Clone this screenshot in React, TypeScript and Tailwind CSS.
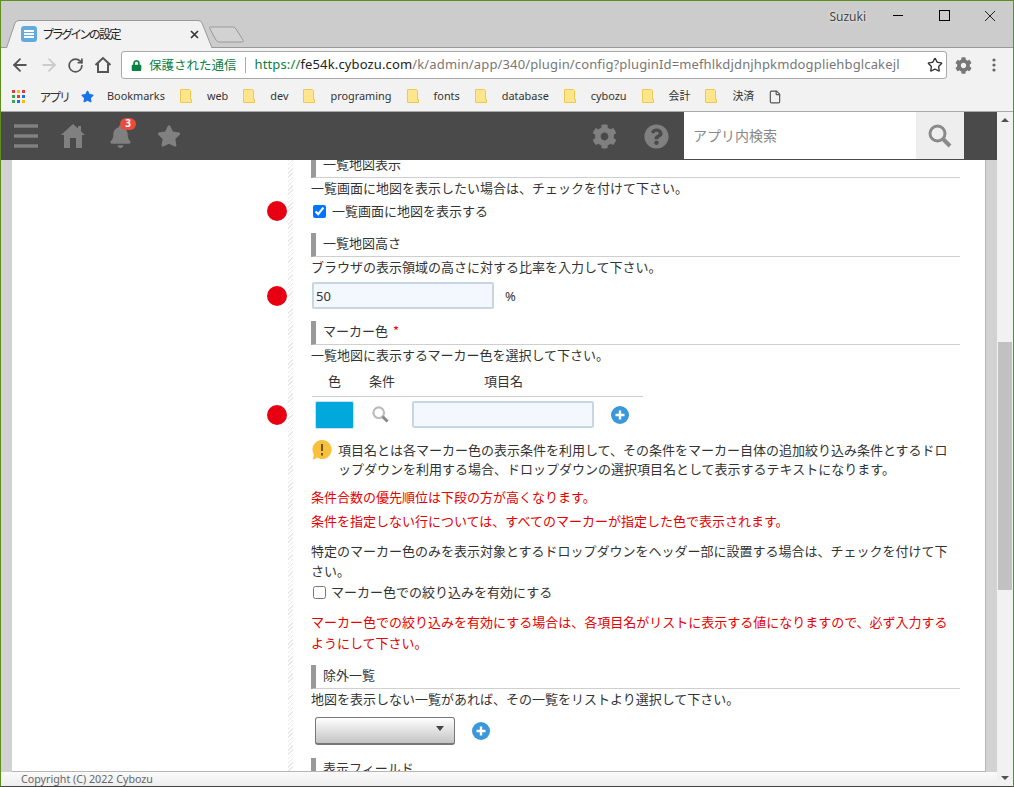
import { ArrowLeft, ArrowRight, RotateCw, Star, File } from "lucide-react";
import { FaBell, FaCog, FaLock, FaQuestionCircle, FaStar } from "react-icons/fa";

const jp = "font-['Noto_Sans_CJK_JP','Noto_Sans',sans-serif]";

const bookmarks = [
  { label: "web" },
  { label: "dev" },
  { label: "programing" },
  { label: "fonts" },
  { label: "database" },
  { label: "cybozu" },
  { label: "会計" },
  { label: "決済" },
];

const appDots = [
  "bg-[#e53935]", "bg-[#fbbc05]", "bg-[#e53935]",
  "bg-[#34a853]", "bg-[#e53935]", "bg-[#1a73e8]",
  "bg-[#34a853]", "bg-[#1a73e8]", "bg-[#fbbc05]",
];

function Folder() {
  return (
    <svg width="12" height="14" viewBox="0 0 12 14" className="shrink-0">
      <path d="M0.5 0.5H9.5L10.5 1.5V10.5H11.5V13.5H0.5Z" fill="#ffe68c" stroke="#eec94f" />
    </svg>
  );
}

function Dot() {
  return <span className="h-5 w-5 shrink-0 rounded-full bg-[#e60012]" />;
}

function Plus() {
  return (
    <span className="flex h-[18px] w-[18px] shrink-0 items-center justify-center rounded-full bg-[#3a97d9]">
      <svg width="12" height="12" viewBox="0 0 12 12">
        <path d="M6 1.5V10.5M1.5 6H10.5" stroke="#fff" strokeWidth="2.4" />
      </svg>
    </span>
  );
}

function Lens({ size, lens, handle }: { size: number; lens: string; handle: string }) {
  return (
    <svg width={size} height={size} viewBox="0 0 24 24" className="shrink-0">
      <circle cx="9.500" cy="9.500" r="7.500" fill="none" stroke={lens} strokeWidth="3" />
      <path d="M15 15L22 22" stroke={handle} strokeWidth="4" />
    </svg>
  );
}

function Heading({ children }: { children: React.ReactNode }) {
  return (
    <div className="flex h-[24px] items-center border-b border-l-[5px] border-b-[#cfcfcf] border-l-[#999] pb-[3px] pl-[7px] text-[13px] leading-[20px]">
      {children}
    </div>
  );
}

export default function App() {
  return (
    <div className={`flex h-[787px] w-[1014px] flex-col overflow-hidden border-x border-t border-x-[#5b8f1f] border-t-[#5b8f1f] border-b border-b-[#444] bg-[#f2f2f2] text-[#333] ${jp}`}>
      {/* title bar + tab */}
      <div className="flex h-[47px] shrink-0 items-end border-b border-[#999] bg-[#cccccc] pl-[5px]">
        <div className="relative -mb-px flex h-[28px] w-[207px] items-center pl-[15px]">
          <svg width="207" height="28" viewBox="0 0 207 28" className="absolute left-0 top-0">
            <path d="M0.5 28L9 3Q10 0.5 13 0.5H192Q195 0.5 196 3L206 28" fill="#f2f2f2" stroke="#999" />
          </svg>
          <span className="relative flex h-4 w-4 flex-col justify-center gap-px rounded-[3px] bg-[#62abdf] px-[3px]">
            <span className="h-[2px] bg-white" />
            <span className="h-[2px] bg-white" />
            <span className="h-[2px] bg-white" />
          </span>
          <span className="relative ml-[6px] w-[138px] whitespace-nowrap text-[12px] tracking-[-1.5px] [font-feature-settings:'palt'] text-[#222]">プラグインの設定</span>
          <svg width="9" height="9" viewBox="0 0 9 9" className="relative ml-[9px]">
            <path d="M1 1L8 8M8 1L1 8" stroke="#333" strokeWidth="1.6" />
          </svg>
        </div>
        <svg width="36" height="18" viewBox="0 0 36 18" className="-ml-[4px] mb-[3px]">
          <path d="M1 1H24Q26 1 27 3L34 14Q35 16 33 16H10Q8 16 7 14L1 3Q0 1 1 1Z" fill="#d2d2d2" stroke="#9a9a9a" />
        </svg>
        <div className="flex-1 self-stretch">
          <div className="flex h-[30px] items-start justify-end">
            <span className="mt-[7px] font-['Noto_Sans'] text-[12px] text-[#444] [text-shadow:0_0_3px_#fff]">Suzuki</span>
            <div className="ml-[27px] mt-[14px] h-px w-[10px] bg-black" />
            <div className="ml-[36px] mt-[9px] h-[11px] w-[11px] border border-black" />
            <svg width="12" height="12" viewBox="0 0 12 12" className="ml-[34px] mr-[17px] mt-[9px]">
              <path d="M1 1L11 11M11 1L1 11" stroke="#222" />
            </svg>
          </div>
        </div>
      </div>

      {/* toolbar */}
      <div className="flex h-[34px] shrink-0 items-center pl-[9px]">
        <ArrowLeft size={20} strokeWidth={2.2} color="#555" />
        <ArrowRight size={20} strokeWidth={2.2} color="#ccc" className="ml-[9px]" />
        <RotateCw size={17} strokeWidth={2.4} color="#555" className="ml-[8px]" />
        <svg width="18" height="18" viewBox="0 0 18 18" className="ml-[10px]">
          <path d="M1.5 9L9 2L16.5 9M4 7.500V16H14V7.500" fill="none" stroke="#555" strokeWidth="2" />
        </svg>
        <div className="ml-[9px] flex h-[28px] w-[826px] items-center rounded-[3px] border border-[#a9a9a9] bg-white pl-[9px]">
          <FaLock size={11} color="#0b8043" />
          <span className="ml-[7px] text-[12.5px] text-[#0b8043]">保護された通信</span>
          <span className="ml-[8px] h-[16px] w-px bg-[#aaa]" />
          <span className="ml-[9px] whitespace-nowrap font-['Noto_Sans'] text-[13px] tracking-[0.14px] text-[#777]">
            <span className="text-[#0b8043]">https://</span>
            <span className="text-[#222]">fe54k.cybozu.com</span>
            /k/admin/app/340/plugin/config?pluginId=mefhlkdjdnjhpkmdogpliehbglcakejl
          </span>
          <Star size={16} strokeWidth={2} color="#333" className="ml-auto mr-[3px]" />
        </div>
        <FaCog size={17} color="#777" className="ml-[8px]" />
        <svg width="4" height="14" viewBox="0 0 4 14" className="ml-[20px]">
          <circle cx="2" cy="2" r="1.600" fill="#666" />
          <circle cx="2" cy="7" r="1.600" fill="#666" />
          <circle cx="2" cy="12" r="1.600" fill="#666" />
        </svg>
      </div>

      {/* bookmarks */}
      <div className="flex h-[30px] shrink-0 items-center gap-[15px] border-b border-[#aaa] pl-[11px] text-[10.9px] text-[#333]">
        <div className="grid grid-cols-3 gap-[2px]">
          {appDots.map((c, i) => (
            <span key={i} className={`h-[3px] w-[3px] ${c}`} />
          ))}
        </div>
        <span className="w-[26px] whitespace-nowrap text-[12px] tracking-[-1.2px] [font-feature-settings:'palt']">アプリ</span>
        <FaStar size={13} color="#1a73e8" />
        <span className="-ml-[2px] font-['Noto_Sans']">Bookmarks</span>
        {bookmarks.map((b) => (
          <div key={b.label} className="flex items-center gap-[15px]">
            <Folder />
            <span className="font-['Noto_Sans','Noto_Sans_CJK_JP']">{b.label}</span>
          </div>
        ))}
        <File size={14} color="#555" className="-ml-px" />
      </div>

      {/* kintone page */}
      <div className="flex min-h-0 flex-1">
        <div className="flex w-[996px] shrink-0 flex-col">
          {/* app header */}
          <div className="flex h-[48px] shrink-0 items-center bg-[#4a4a4a] text-[#808080]">
            <svg width="26" height="26" viewBox="0 0 26 26" className="ml-[12px]">
              <path d="M1 3H25M1 13H25M1 23H25" stroke="#808080" strokeWidth="3.400" />
            </svg>
            <svg width="26" height="26" viewBox="0 0 26 26" className="ml-[21px]">
              <path d="M13 1L18 5.500V3H21V8.300L25 12H22V25H16V15H10V25H4V12H1Z" fill="#808080" />
            </svg>
            <div className="relative ml-[23px]">
              <FaBell size={23} />
              <span className="absolute -right-[4px] -top-[7px] flex h-[12px] w-[16px] items-center justify-center rounded-full bg-[#e74c3c] font-['Noto_Sans'] text-[10px] font-bold text-white">3</span>
            </div>
            <FaStar size={24} className="ml-[25px]" />
            <FaCog size={25} className="ml-auto" />
            <FaQuestionCircle size={25} className="ml-[27px]" />
            <div className="ml-[15px] flex h-[47px] w-[232px] items-center self-start bg-white pl-[9px] text-[14px] text-[#888]">アプリ内検索</div>
            <div className="flex h-[47px] w-[48px] items-center justify-center self-start bg-[#eeeeee]">
              <Lens size={24} lens="#8a8a8a" handle="#8a8a8a" />
            </div>
            <div className="w-[33px]" />
          </div>

          {/* form area */}
          <div className="flex min-h-0 flex-1 bg-[#d2d2d2] pl-[11px] pr-[11px]">
            <div className="min-w-0 flex-1 overflow-hidden border-b border-r border-[#b5b5b5] bg-white bg-[repeating-linear-gradient(135deg,#e8e8e8_0,#e8e8e8_1px,#fff_1px,#fff_3px)] bg-[length:5px_100%] bg-[position:276px_0] bg-no-repeat pl-[299px] pr-[25px] text-[13px] leading-[20px]">
              <div className="-mt-[6px]">
                <Heading>一覧地図表示</Heading>
              </div>
              <p>一覧画面に地図を表示したい場合は、チェックを付けて下さい。</p>
              <div className="-ml-[44px] mt-[3px] flex h-[20px] items-center">
                <Dot />
                <input type="checkbox" defaultChecked readOnly className="ml-[26px] h-[13px] w-[13px]" />
                <span className="ml-[6px]">一覧画面に地図を表示する</span>
              </div>
              <div className="mt-[12px]">
                <Heading>一覧地図高さ</Heading>
              </div>
              <p>ブラウザの表示領域の高さに対する比率を入力して下さい。</p>
              <div className="-ml-[44px] mt-[5px] flex items-center">
                <Dot />
                <input
                  defaultValue="50"
                  className="ml-[25px] h-[27px] w-[182px] rounded-[2px] border-2 border-[#c8d6e3] bg-[#f2f8fd] px-[2px] font-['Noto_Sans'] text-[13px] text-[#333]"
                />
                <span className="ml-[11px] font-['Noto_Sans']">%</span>
              </div>
              <div className="mt-[12px]">
                <Heading>
                  マーカー色<span className="ml-[5px] text-[#e00]">*</span>
                </Heading>
              </div>
              <p>一覧地図に表示するマーカー色を選択して下さい。</p>

              {/* marker table */}
              <div className="ml-[1px] mt-[2px] flex h-[30px] w-[331px] items-center border-b border-[#cfcfcf] pb-[2px]">
                <span className="ml-[16px]">色</span>
                <span className="ml-[28px]">条件</span>
                <span className="ml-[89px]">項目名</span>
              </div>
              <div className="-ml-[44px] mt-[4px] flex h-[27px] items-center">
                <Dot />
                <span className="ml-[28px] h-[28px] w-[39px] rounded-[2px] border border-[#cde] bg-[#00a8dc]" />
                <span className="ml-[18px]">
                  <Lens size={17} lens="#bbb" handle="#888" />
                </span>
                <input className="ml-[23px] h-[27px] w-[182px] rounded-[2px] border-2 border-[#c8d6e3] bg-[#f2f8fd]" />
                <span className="ml-[17px]">
                  <Plus />
                </span>
              </div>

              {/* notice */}
              <div className="ml-[1px] mt-[12px] flex">
                <svg width="20" height="20" viewBox="0 0 20 20" className="shrink-0">
                  <path d="M10 0A9.500 9.500 0 1 1 5 17.500Q3 19.500 0.500 19.500Q2 17 1.600 14A9.500 9.500 0 0 1 10 0Z" fill="#f9c03d" />
                  <path d="M10 4V11M10 13V15.500" stroke="#6b5a20" strokeWidth="2" />
                </svg>
                <p className="ml-[6px] leading-[19px]">
                  項目名とは各マーカー色の表示条件を利用して、その条件をマーカー自体の追加絞り込み条件とするドロ
                  <br />
                  ップダウンを利用する場合、ドロップダウンの選択項目名として表示するテキストになります。
                </p>
              </div>
              <p className="mt-[7px] leading-[24px] text-[#e60000]">
                条件合数の優先順位は下段の方が高くなります。
                <br />
                条件を指定しない行については、すべてのマーカーが指定した色で表示されます。
              </p>
              <p className="mt-[8px]">
                特定のマーカー色のみを表示対象とするドロップダウンをヘッダー部に設置する場合は、チェックを付けて下
                <br />
                さい。
              </p>
              <label className="ml-[2px] flex h-[22px] items-center">
                <input type="checkbox" className="h-[13px] w-[13px]" />
                <span className="ml-[5px]">マーカー色での絞り込みを有効にする</span>
              </label>
              <p className="mt-[8px] leading-[21px] text-[#e60000]">
                マーカー色での絞り込みを有効にする場合は、各項目名がリストに表示する値になりますので、必ず入力する
                <br />
                ようにして下さい。
              </p>
              <div className="mt-[12px]">
                <Heading>除外一覧</Heading>
              </div>
              <p>地図を表示しない一覧があれば、その一覧をリストより選択して下さい。</p>
              <div className="ml-[4px] mt-[8px] flex items-center">
                <div className="flex h-[28px] w-[140px] items-start justify-end rounded-[3px] border border-b-2 border-[#777] bg-gradient-to-b from-white to-[#c4c4c4] pr-[10px] pt-[8px]">
                  <span className="h-0 w-0 border-x-[4px] border-t-[5px] border-x-transparent border-t-[#444]" />
                </div>
                <span className="ml-[17px]">
                  <Plus />
                </span>
              </div>
              <div className="mt-[13px]">
                <Heading>表示フィールド</Heading>
              </div>
            </div>
          </div>

          {/* footer */}
          <div className="flex h-[14px] shrink-0 items-center bg-gradient-to-b from-[#fafafa] to-[#eeeeee] pl-[20px] font-['Noto_Sans'] text-[10.7px] text-[#666]">
            Copyright (C) 2022 Cybozu
          </div>
        </div>

        {/* page scrollbar */}
        <div className="flex min-w-0 flex-1 flex-col items-center bg-[#f1f1f1]">
          <span className="mt-[6px] h-0 w-0 border-x-[4px] border-b-[4px] border-x-transparent border-b-[#505050]" />
          <span className="mt-[220px] h-[248px] w-[14px] bg-[#c1c1c1]" />
          <span className="mb-[6px] mt-auto h-0 w-0 border-x-[4px] border-t-[4px] border-x-transparent border-t-[#505050]" />
        </div>
      </div>
    </div>
  );
}
